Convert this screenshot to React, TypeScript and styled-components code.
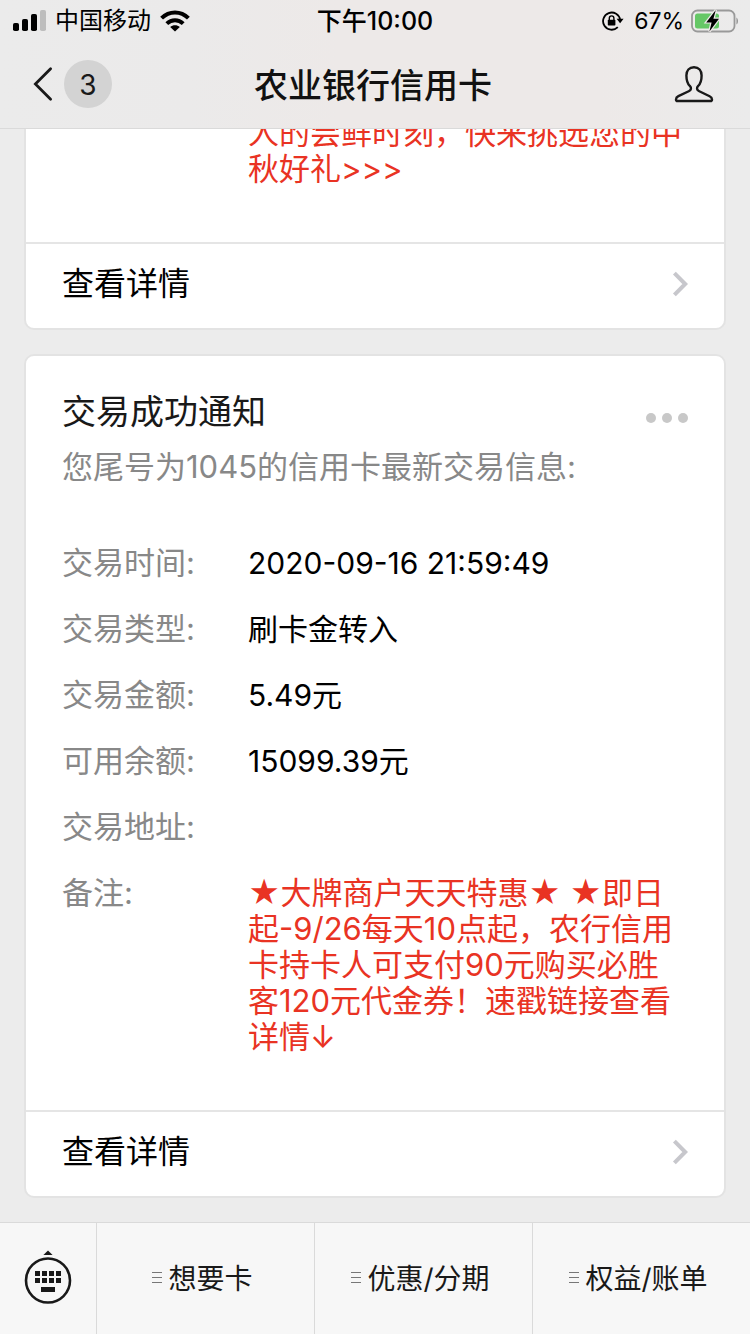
import React from 'react';
import styled, { createGlobalStyle } from 'styled-components';

const GlobalStyle = createGlobalStyle`
  * { box-sizing: border-box; }
  body {
    margin: 0;
    background: #ececec;
    font-family: Inter, "Noto Sans CJK SC", sans-serif;
    color: #000;
  }
  button { border: 0; padding: 0; background: none; font: inherit; color: inherit; cursor: pointer; }
  a { color: inherit; text-decoration: none; }
  h1, h2, p, dl, dd, dt { margin: 0; font-weight: 400; }
  svg { display: block; flex: none; }
`;

const Page = styled.div`
  display: flex;
  flex-direction: column;
  height: 100vh;
`;

const Header = styled.header`
  flex: none;
  border-bottom: 1px solid #dadada;
  background: linear-gradient(90deg, #ebebeb 0%, #ebeaea 25%, #ede9e8 45%, #ede9e8 80%, #ebebeb 100%);
`;

const StatusBar = styled.div`
  display: grid;
  grid-template-columns: 1fr auto 1fr;
  align-items: center;
  height: 40px;
  padding: 0 12px;
  font-size: 24px;
  line-height: 42px;
`;

const StatusGroup = styled.div<{ $end?: boolean }>`
  display: flex;
  align-items: center;
  gap: ${p => (p.$end ? 6 : 9)}px;
  justify-content: ${p => (p.$end ? 'flex-end' : 'flex-start')};
`;

const Percent = styled.span`
  padding-left: 4px;
  font-size: 23px;
`;

const Clock = styled.time`
  font-size: 25px;
  font-weight: 500;
`;

const NavBar = styled.div`
  display: grid;
  grid-template-columns: 1fr auto 1fr;
  align-items: center;
  height: 88px;
  padding: 0 36px 0 32px;
`;

const BackButton = styled.button`
  display: flex;
  align-items: center;
  gap: 10px;
  justify-self: start;
`;

const UnreadCount = styled.span`
  width: 48px;
  height: 48px;
  border-radius: 50%;
  background: #d3d3d3;
  color: #191919;
  font-size: 28px;
  line-height: 50px;
  text-align: center;
`;

const NavTitle = styled.h1`
  padding-top: 4px;
  color: #111;
  font-size: 34px;
  line-height: 48px;
  && { font-weight: 500; }
`;

const ProfileButton = styled.button`
  justify-self: end;
`;

const Feed = styled.main`
  display: flex;
  flex: 1;
  flex-direction: column-reverse;
  min-height: 0;
  overflow: hidden auto;
  scrollbar-width: none;
`;

const Messages = styled.div`
  display: flex;
  flex-direction: column;
  gap: 24px;
  padding: 0 24px 24px;
`;

const Card = styled.article<{ $continued?: boolean }>`
  border: 2px solid #e3e3e3;
  border-top-width: ${p => (p.$continued ? 0 : 2)}px;
  border-radius: ${p => (p.$continued ? '0 0 10px 10px' : '10px')};
  background: #fff;
`;

const CardBody = styled.div<{ $continued?: boolean }>`
  padding: ${p => (p.$continued ? 0 : 32)}px 36px 55px;
`;

const CardHead = styled.div`
  display: flex;
  align-items: center;
  justify-content: space-between;
`;

const CardTitle = styled.h2`
  color: #191919;
  font-size: 34px;
  line-height: 48px;
`;

const MoreButton = styled.button`
  padding-top: 12px;
`;

const Summary = styled.p`
  margin: 13px 0 60px;
  color: #888;
  font-size: 31px;
  line-height: 36px;
`;

const Details = styled.dl`
  display: flex;
  flex-direction: column;
  gap: 30px;
`;

const DetailRow = styled.div`
  display: grid;
  grid-template-columns: 186px 1fr;
  min-height: 36px;
  font-size: 31px;
  line-height: 36px;
`;

const Term = styled.dt`
  color: #888;
`;

const Value = styled.dd<{ $alert?: boolean }>`
  color: ${p => (p.$alert ? '#e93323' : '#000')};
  font-size: ${p => (p.$alert ? 31 : 30)}px;
  white-space: nowrap;
`;

const DetailLink = styled.a`
  display: flex;
  align-items: center;
  justify-content: space-between;
  height: 86px;
  padding: 0 36px 10px;
  border-top: 2px solid #e5e5e5;
  font-size: 32px;
`;

const LinkArrow = styled.span`
  padding-top: 6px;
`;

const MenuBar = styled.nav`
  display: flex;
  flex: none;
  height: 112px;
  border-top: 1px solid #dadada;
  background: #f7f7f7;
`;

const KeyboardButton = styled.button`
  display: grid;
  place-items: center;
  width: 96px;
  padding-bottom: 4px;
`;

const MenuButton = styled.button`
  display: flex;
  flex: 1;
  align-items: center;
  justify-content: center;
  gap: 6px;
  padding: 0 6px 4px 0;
  border-left: 1px solid #dadada;
  color: #191919;
  font-size: 28px;
`;

const SignalIcon = () => (
  <svg width="34" height="22" viewBox="0 0 34 22" aria-hidden="true">
    <rect x="1" y="13" width="6" height="8" rx="1.8" />
    <rect x="10" y="9" width="6" height="12" rx="1.8" />
    <rect x="19" y="4" width="6" height="17" rx="1.8" />
    <rect x="28" y="0" width="6" height="21" rx="1.8" fill="#bdbdbd" />
  </svg>
);

const WifiIcon = () => (
  <svg width="30" height="22" viewBox="0 0 30 22" aria-hidden="true">
    <g fill="none" stroke="#000" strokeWidth="4">
      <path d="M1.6 8.2C9.2 0.6 20.8 0.6 28.4 8.2" />
      <path d="M6.8 13.6C11.6 9 18.4 9 23.2 13.6" />
    </g>
    <path d="M15 21.6L10.2 16.9C12.8 14.7 17.2 14.7 19.8 16.9Z" />
  </svg>
);

const RotationLockIcon = () => (
  <svg width="22" height="20" viewBox="0 0 22 20" aria-hidden="true">
    <path d="M15.8 16.2A8.6 8.6 0 1 1 18.2 9" fill="none" stroke="#000" strokeWidth="1.8" />
    <path d="M14.6 7.8H21.6L18.1 12.2Z" />
    <rect x="5.8" y="8.8" width="7.6" height="5.8" rx="0.8" />
    <path d="M7.3 9V7.2A2.3 2.3 0 0 1 11.9 7.2V9" fill="none" stroke="#000" strokeWidth="1.4" />
  </svg>
);

const BatteryIcon = () => (
  <svg width="48" height="24" viewBox="0 0 48 24" aria-hidden="true">
    <rect x="2" y="1.5" width="42.5" height="21" rx="5.5" fill="none" stroke="#999" strokeWidth="1.8" />
    <path d="M46.4 8.4C48.6 9.6 48.6 14.4 46.4 15.6Z" fill="#999" />
    <rect x="5" y="4.5" width="24" height="15" rx="2.5" fill="#65c766" />
    <path
      d="M25.8 1L16.2 13.4H21.6L19.4 22.6L29 9.8H23.4Z"
      stroke="#ede9e8"
      strokeWidth="2.4"
      paintOrder="stroke"
    />
  </svg>
);

const BackIcon = () => (
  <svg width="22" height="36" viewBox="0 0 22 36" fill="none" stroke="#191919" strokeWidth="2.8" strokeLinecap="round" aria-hidden="true">
    <path d="M18.6 2.8L3.4 18L18.6 33.2" />
  </svg>
);

const ProfileIcon = () => (
  <svg width="40" height="38" viewBox="0 0 40 38" fill="none" stroke="#191919" strokeWidth="2.4" strokeLinejoin="round" aria-hidden="true">
    <path d="M20 2.2C15.2 2.2 12.4 5.6 12.4 10.4C12.4 15 13.4 18.6 16 21.2C17.6 22.8 17.2 25 15.2 26L4.4 31.2C2.4 32.2 2 33.2 2 34.4C2 35.6 2.6 36 3.6 36H36.4C37.4 36 38 35.6 38 34.4C38 33.2 37.6 32.2 35.6 31.2L24.8 26C22.8 25 22.4 22.8 24 21.2C26.6 18.6 27.6 15 27.6 10.4C27.6 5.6 24.8 2.2 20 2.2Z" />
  </svg>
);

const MoreIcon = () => (
  <svg width="44" height="12" viewBox="0 0 44 12" fill="#c8c8c8" aria-hidden="true">
    <circle cx="7" cy="6" r="5" />
    <circle cx="23" cy="6" r="5" />
    <circle cx="39" cy="6" r="5" />
  </svg>
);

const ArrowIcon = () => (
  <svg width="16" height="26" viewBox="0 0 16 26" fill="none" stroke="#c7c7cc" strokeWidth="4" aria-hidden="true">
    <path d="M2.4 2.2L13.2 13L2.4 23.8" />
  </svg>
);

const KeyboardIcon = () => (
  <svg width="48" height="56" viewBox="0 0 48 56" fill="#191919" aria-hidden="true">
    <path d="M24 1.4L28.6 6H19.4Z" />
    <circle cx="24" cy="31.5" r="22" fill="none" stroke="#191919" strokeWidth="2.6" />
    {[22, 29].map(y =>
      [11, 18, 25, 32].map(x => <rect key={`${x}-${y}`} x={x} y={y} width="5" height="5" />)
    )}
    <rect x="17" y="38" width="14" height="5" />
  </svg>
);

const MenuLinesIcon = () => (
  <svg width="10" height="12" viewBox="0 0 10 12" stroke="#777" aria-hidden="true">
    <path d="M0 1.5H10M0 6.5H10M0 11.5H10" />
  </svg>
);

const NOTICE_ROWS = [
  { term: '交易时间:', value: '2020-09-16 21:59:49' },
  { term: '交易类型:', value: '刷卡金转入' },
  { term: '交易金额:', value: '5.49元' },
  { term: '可用余额:', value: '15099.39元' },
  { term: '交易地址:', value: '' },
];

const REMARK_LINES = [
  '★大牌商户天天特惠★ ★即日',
  '起-9/26每天10点起，农行信用',
  '卡持卡人可支付90元购买必胜',
  '客120元代金券！速戳链接查看',
  '详情↓',
];

const PROMO_LINES = ['人的尝鲜时刻，快来挑选您的中', '秋好礼>>>'];

const MENUS = ['想要卡', '优惠/分期', '权益/账单'];

const Lines = ({ lines }: { lines: string[] }) => (
  <>
    {lines.map((line, i) => (
      <React.Fragment key={line}>
        {i > 0 && <br />}
        {line}
      </React.Fragment>
    ))}
  </>
);

const ViewDetails = () => (
  <DetailLink href="#details">
    查看详情
    <LinkArrow>
      <ArrowIcon />
    </LinkArrow>
  </DetailLink>
);

export default function App() {
  return (
    <Page>
      <GlobalStyle />
      <Header>
        <StatusBar>
          <StatusGroup>
            <SignalIcon />
            <span>中国移动</span>
            <WifiIcon />
          </StatusGroup>
          <Clock>下午10:00</Clock>
          <StatusGroup $end>
            <RotationLockIcon />
            <Percent>67%</Percent>
            <BatteryIcon />
          </StatusGroup>
        </StatusBar>
        <NavBar>
          <BackButton aria-label="返回">
            <BackIcon />
            <UnreadCount>3</UnreadCount>
          </BackButton>
          <NavTitle>农业银行信用卡</NavTitle>
          <ProfileButton aria-label="账号资料">
            <ProfileIcon />
          </ProfileButton>
        </NavBar>
      </Header>

      <Feed>
        <Messages>
          <Card $continued>
            <CardBody $continued>
              <Details>
                <DetailRow>
                  <Term />
                  <Value $alert>
                    <Lines lines={PROMO_LINES} />
                  </Value>
                </DetailRow>
              </Details>
            </CardBody>
            <ViewDetails />
          </Card>

          <Card>
            <CardBody>
              <CardHead>
                <CardTitle>交易成功通知</CardTitle>
                <MoreButton aria-label="更多">
                  <MoreIcon />
                </MoreButton>
              </CardHead>
              <Summary>您尾号为1045的信用卡最新交易信息:</Summary>
              <Details>
                {NOTICE_ROWS.map(row => (
                  <DetailRow key={row.term}>
                    <Term>{row.term}</Term>
                    <Value>{row.value}</Value>
                  </DetailRow>
                ))}
                <DetailRow>
                  <Term>备注:</Term>
                  <Value $alert>
                    <Lines lines={REMARK_LINES} />
                  </Value>
                </DetailRow>
              </Details>
            </CardBody>
            <ViewDetails />
          </Card>
        </Messages>
      </Feed>

      <MenuBar>
        <KeyboardButton aria-label="切换键盘">
          <KeyboardIcon />
        </KeyboardButton>
        {MENUS.map(label => (
          <MenuButton key={label}>
            <MenuLinesIcon />
            {label}
          </MenuButton>
        ))}
      </MenuBar>
    </Page>
  );
}
